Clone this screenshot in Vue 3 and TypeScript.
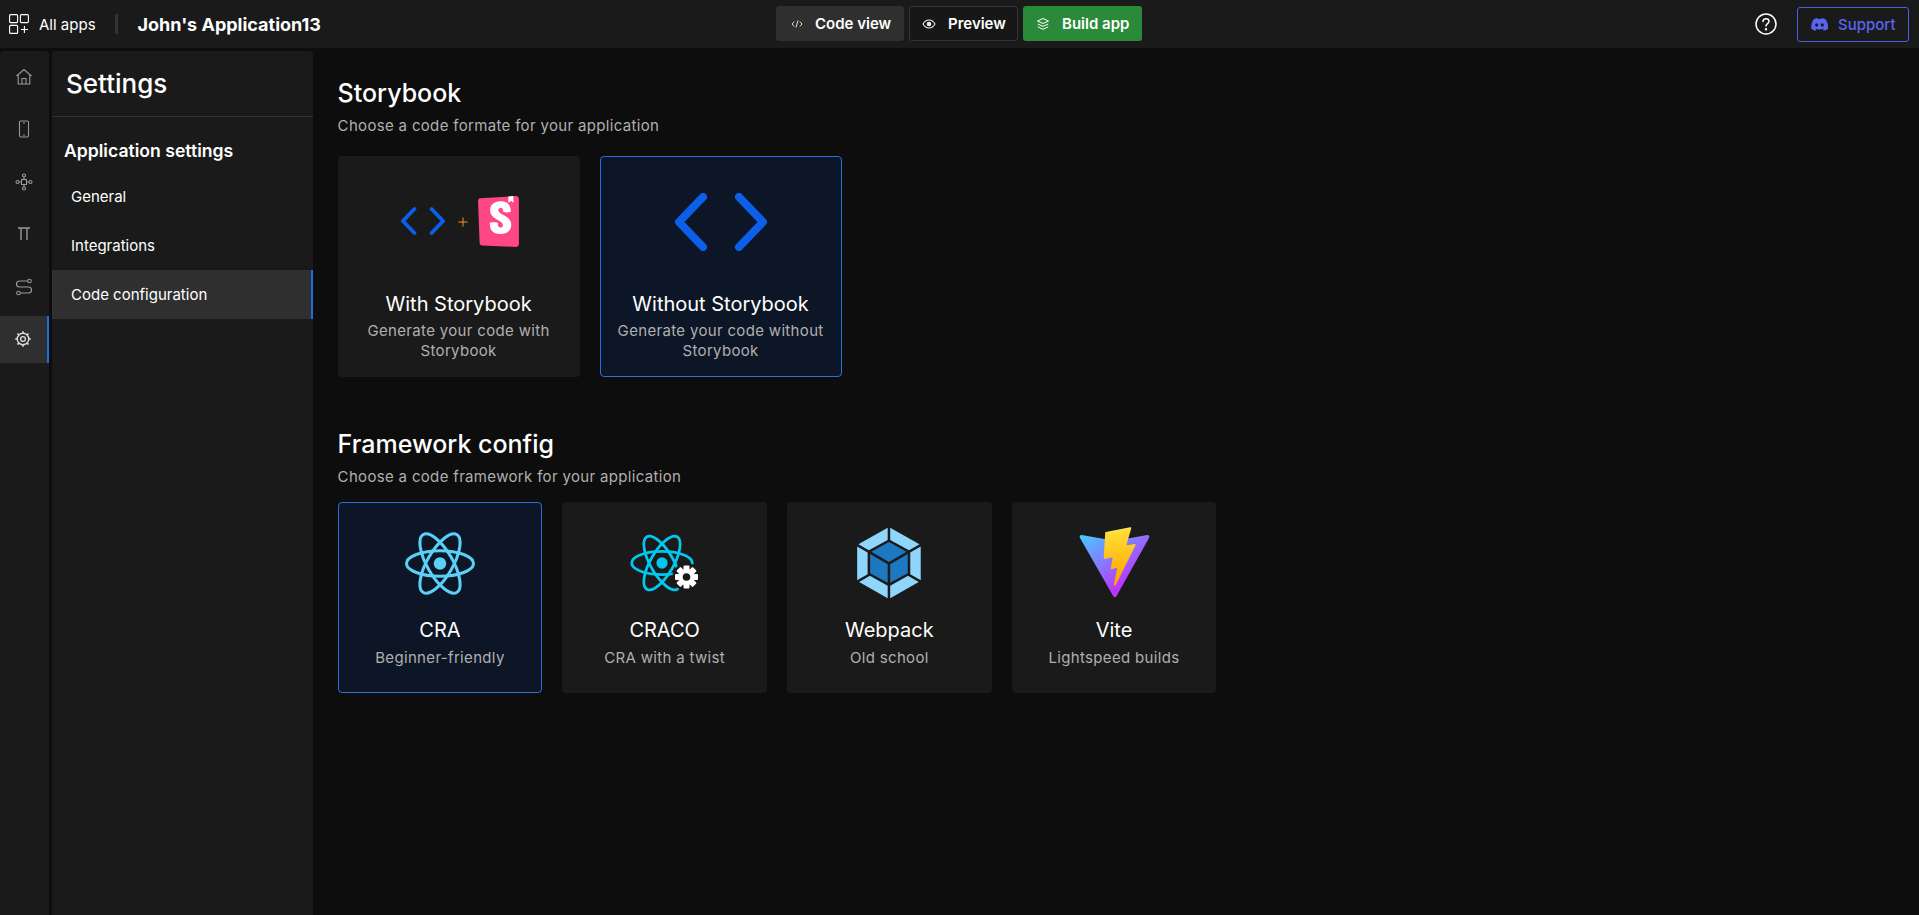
<script setup lang="ts">
const railIcons = ["home", "phone", "flow", "pi", "route", "gear"];
const menu = ["General", "Integrations", "Code configuration"];

const formats = [
  { key: "with", title: "With Storybook", desc: "Generate your code with Storybook" },
  { key: "without", title: "Without Storybook", desc: "Generate your code without Storybook", active: true },
];

const frameworks = [
  { key: "cra", title: "CRA", desc: "Beginner-friendly", active: true },
  { key: "craco", title: "CRACO", desc: "CRA with a twist" },
  { key: "webpack", title: "Webpack", desc: "Old school" },
  { key: "vite", title: "Vite", desc: "Lightspeed builds" },
];
</script>

<template>
  <div class="app">
    <header class="topbar">
      <div class="top-left">
        <svg class="apps-icon" viewBox="0 0 20 20" fill="none" stroke="#fff" stroke-width="1.1">
          <rect x="0.6" y="0.6" width="8" height="8" rx="1" />
          <rect x="11.4" y="0.6" width="8" height="8" rx="1" />
          <rect x="0.6" y="11.4" width="8" height="8" rx="1" />
          <path d="M15.4 12v7M12 15.5h7" />
        </svg>
        <span class="all-apps">All apps</span>
        <span class="divider"></span>
        <span class="app-name">John's Application13</span>
      </div>
      <div class="top-center">
        <button class="btn btn-code">
          <svg width="12" height="12" viewBox="0 0 12 12" fill="none" stroke="#ddd" stroke-width="1">
            <path d="M3.2 3.5 1 6l2.2 2.5M8.8 3.5 11 6 8.8 8.5M7 2.5 5 9.5" />
          </svg>
          Code view
        </button>
        <button class="btn btn-preview">
          <svg width="14" height="14" viewBox="0 0 14 14" fill="none" stroke="#eee" stroke-width="1.1">
            <path d="M1 7c1.5-2.7 3.5-4 6-4s4.500 1.300 6 4c-1.500 2.700-3.500 4-6 4s-4.500-1.300-6-4z" />
            <circle cx="7" cy="7" r="1.8" fill="#eee" />
          </svg>
          Preview
        </button>
        <button class="btn btn-build">
          <svg width="14" height="14" viewBox="0 0 14 14" fill="none" stroke="#fff" stroke-width="1">
            <path d="M7 1.500 12.500 4 7 6.500 1.500 4zM1.800 7 7 9.400 12.200 7M1.800 9.800 7 12.300l5.200-2.500" />
          </svg>
          Build app
        </button>
      </div>
      <div class="top-right">
        <svg class="help" width="22" height="22" viewBox="0 0 22 22" fill="none" stroke="#fff" stroke-width="1.5">
          <circle cx="11" cy="11" r="10" />
          <path d="M8 8.500c0-1.700 1.300-2.800 3-2.800s3 1.100 3 2.600c0 2.400-3 2.400-3 4.700" stroke-linecap="round" />
          <circle cx="11" cy="16.200" r="0.5" fill="#fff" />
        </svg>
        <button class="support">
          <svg width="17" height="13" viewBox="0 0 71 55" fill="#5865f2">
            <path
              d="M60.100 4.900A58.500 58.500 0 0 0 45.700.4a40 40 0 0 0-1.800 3.700 54 54 0 0 0-16.200 0A37 37 0 0 0 25.800.4 58.300 58.300 0 0 0 11.300 4.900C2.200 18.600-.3 31.900.9 45.100a59 59 0 0 0 17.900 9.100c1.500-2 2.700-4.100 3.800-6.300a38 38 0 0 1-5.700-2.700l1.400-1.100a42 42 0 0 0 35.800 0l1.400 1.100a36 36 0 0 1-5.700 2.700c1.100 2.200 2.300 4.300 3.800 6.300a58.800 58.800 0 0 0 17.900-9.100c1.400-15.300-2.500-28.500-10.400-40.200zM23.700 37c-3.500 0-6.400-3.200-6.400-7.200s2.800-7.200 6.400-7.200 6.500 3.300 6.400 7.200c0 4-2.800 7.200-6.400 7.200zm23.600 0c-3.500 0-6.400-3.200-6.400-7.200s2.800-7.200 6.400-7.200 6.500 3.300 6.400 7.200c0 4-2.800 7.200-6.400 7.200z"
            />
          </svg>
          Support
        </button>
      </div>
    </header>

    <div class="body">
      <nav class="rail">
        <div v-for="icon in railIcons" :key="icon" class="rail-item" :class="{ active: icon === 'gear' }">
          <svg width="20" height="20" viewBox="0 0 20 20" fill="none" stroke="currentColor" stroke-width="1.1">
            <template v-if="icon === 'home'">
              <path d="M2.500 9 10 2.500 17.500 9M4.200 8v9h11.600V8" />
              <path d="M8 17v-5.500h4V17" />
            </template>
            <template v-else-if="icon === 'phone'">
              <rect x="5.500" y="2" width="9" height="16" rx="1.200" />
              <path d="M9 4h2M9 16h2" />
            </template>
            <template v-else-if="icon === 'flow'">
              <rect x="7.500" y="7.500" width="5" height="5" />
              <circle cx="10" cy="3.500" r="1.500" />
              <circle cx="10" cy="16.500" r="1.500" />
              <circle cx="3.500" cy="10" r="1.500" />
              <circle cx="16.500" cy="10" r="1.500" />
              <path d="M10 5v2.500M10 12.500V15M5 10h2.500M12.500 10H15" />
            </template>
            <template v-else-if="icon === 'pi'">
              <path d="M4 4h12M7 4v12M13 4v12" stroke-width="1.400" />
            </template>
            <template v-else-if="icon === 'route'">
              <circle cx="15.500" cy="4" r="1.800" />
              <circle cx="4.500" cy="16" r="1.800" />
              <path d="M13.700 4H5.500a2.900 2.900 0 0 0 0 6h9a3 3 0 0 1 0 6H6.300" stroke-width="1.200" />
            </template>
            <template v-else>
              <circle cx="10" cy="10" r="2.400" stroke-width="1.300" />
              <circle cx="10" cy="10" r="5.800" stroke-width="1.400" />
              <path
                d="M10 2.200v2M10 15.800v2M2.200 10h2M15.800 10h2M4.500 4.500 5.900 5.900M14.100 14.100l1.400 1.400M4.500 15.500l1.400-1.400M14.100 5.900l1.400-1.400"
                stroke-width="1.600"
              />
            </template>
          </svg>
        </div>
      </nav>

      <aside class="sidebar">
        <div class="side-head">Settings</div>
        <div class="side-group">Application settings</div>
        <div v-for="m in menu" :key="m" class="side-item" :class="{ active: m === 'Code configuration' }">{{ m }}</div>
      </aside>

      <main class="content">
        <h2 class="title">Storybook</h2>
        <p class="subtitle">Choose a code formate for your application</p>
        <div class="format-row">
          <div v-for="f in formats" :key="f.key" class="card format" :class="{ active: f.active }">
            <div class="logo" :class="{ 'logo-with': f.key === 'with' }">
              <template v-if="f.key === 'with'">
                <svg width="44" height="28" viewBox="0 0 92 58" fill="none" stroke="#0b5fe8" stroke-width="8" stroke-linecap="round" stroke-linejoin="round">
                  <path d="M28 4 4 29l24 25M64 4l24 25-24 25" />
                </svg>
                <svg class="plus" width="10" height="10" viewBox="0 0 10 10" stroke="#f7911c" stroke-width="1">
                  <path d="M5 .5v9M.5 5h9" />
                </svg>
                <svg width="41" height="51" viewBox="0 0 256 319">
                  <path
                    fill="#ff4785"
                    d="M9.870 293.320.01 30.570C-.31 21.900 6.340 14.550 15.010 14L238.490.03C247.310-.52 254.910 6.180 255.470 15c.02.33.03.66.03 1V302.560c0 8.840-7.160 16-16 16-.24 0-.48 0-.72-.02l-213.600-9.600c-8.320-.37-14.970-7.200-15.280-15.620z"
                  />
                  <path
                    fill="#fff"
                    d="M188.660 39.130l1.530-36.750 30.720-2.410 1.320 37.900a2.400 2.400 0 0 1-3.890 1.970l-11.850-9.320-14.020 10.630a2.400 2.400 0 0 1-3.850-2.020zM157.650 98.910c0 6.220 41.960 3.240 47.600-1.100 0-42.420-22.770-64.720-64.460-64.720-41.680 0-65.040 22.640-65.040 56.600 0 59.140 79.820 60.270 79.820 92.530 0 9.060-4.440 14.430-14.200 14.430-12.720 0-17.750-6.500-17.160-28.600 0-4.790-48.500-6.290-49.980 0-3.760 53.610 29.630 69.070 67.730 69.070 36.920 0 65.860-19.680 65.860-55.300 0-63.320-80.990-61.620-80.990-93 0-12.720 9.470-14.420 15.080-14.420 5.910 0 16.550 1.040 15.740 24.510z"
                  />
                </svg>
              </template>
              <svg v-else width="92" height="58" viewBox="0 0 92 58" fill="none" stroke="#0b5fe8" stroke-width="8" stroke-linecap="round" stroke-linejoin="round">
                <path d="M28 4 4 29l24 25M64 4l24 25-24 25" />
              </svg>
            </div>
            <div class="card-title">{{ f.title }}</div>
            <div class="card-desc">{{ f.desc }}</div>
          </div>
        </div>

        <h2 class="title second">Framework config</h2>
        <p class="subtitle">Choose a code framework for your application</p>
        <div class="framework-row">
          <div v-for="f in frameworks" :key="f.key" class="card framework" :class="{ active: f.active }">
            <div class="logo">
              <svg v-if="f.key === 'cra'" width="70" height="63" viewBox="-11.500 -10.230 23 20.460" fill="none" stroke="#5ad0f7">
                <circle r="2.050" fill="#5ad0f7" stroke="none" />
                <ellipse rx="11" ry="4.200" />
                <ellipse rx="11" ry="4.200" transform="rotate(60)" />
                <ellipse rx="11" ry="4.200" transform="rotate(120)" />
              </svg>
              <svg v-else-if="f.key === 'craco'" class="craco" width="66" height="62" viewBox="0 0 66 62" fill="none">
                <g transform="translate(30 31) scale(2.750)" stroke="#00c8f0">
                  <circle r="2.050" fill="#00c8f0" stroke="none" />
                  <ellipse rx="11" ry="4.200" />
                  <ellipse rx="11" ry="4.200" transform="rotate(60)" />
                  <ellipse rx="11" ry="4.200" transform="rotate(120)" />
                </g>
                <circle cx="54.500" cy="45" r="14" fill="#1a1a1a" />
                <g transform="translate(54.500 45)" fill="#fff">
                  <circle r="8" />
                  <rect v-for="a in [0, 45, 90, 135]" :key="a" x="-11.500" y="-3" width="23" height="6" rx="1" :transform="`rotate(${a})`" />
                  <circle r="3.800" fill="#1a1a1a" />
                </g>
              </svg>
              <svg v-else-if="f.key === 'webpack'" width="82" height="82" viewBox="0 0 1200 1200">
                <path
                  fill="#8ed6fb"
                  d="M1035.600 879.300l-418.100 236.500V931.600L878 788.300l157.600 91zm28.600-25.900V358.800l-153 88.300V765l153 88.400zm-901.500 25.900l418.100 236.500V931.600L320.300 788.300l-157.600 91zm-28.600-25.900V358.800l153 88.300V765l-153 88.400zM152 326.800L580.800 84.200v178.100L306.100 413.400l-2.100 1.200-152-87.800zm894.300 0L617.500 84.100v178.100l274.700 151.100 2.100 1.200 152-87.700z"
                />
                <path
                  fill="#1c78c0"
                  d="M580.800 889.700l-257-141.300v-280l257 148.400v272.900zm36.700 0l257-141.200V468.400L617.500 616.800v272.900zm-18.300-283.600zM341.200 436l258-141.900 258 141.900-258 149-258-149z"
                />
              </svg>
              <svg v-else width="73" height="72" viewBox="0 0 410 404" fill="none">
                <defs>
                  <linearGradient id="viteA" x1="6" y1="33" x2="235" y2="344" gradientUnits="userSpaceOnUse">
                    <stop stop-color="#41d1ff" />
                    <stop offset="1" stop-color="#bd34fe" />
                  </linearGradient>
                  <linearGradient id="viteB" x1="194.650" y1="8.820" x2="236.080" y2="292.990" gradientUnits="userSpaceOnUse">
                    <stop stop-color="#ffea83" />
                    <stop offset="0.083" stop-color="#ffdd35" />
                    <stop offset="1" stop-color="#ffa800" />
                  </linearGradient>
                </defs>
                <path
                  fill="url(#viteA)"
                  d="M399.641 59.525 215.643 388.545c-3.799 6.793-13.559 6.833-17.415.073L10.582 59.556C6.381 52.190 12.680 43.267 21.028 44.759l184.195 32.923c1.175.21 2.378.208 3.553-.006l180.343-32.870c8.320-1.517 14.649 7.338 10.522 14.719z"
                />
                <path
                  fill="url(#viteB)"
                  d="M292.965 1.574 156.801 28.255c-2.238.439-3.895 2.335-4.030 4.611l-8.376 141.464c-.197 3.332 2.863 5.918 6.115 5.168l37.910-8.749c3.547-.818 6.752 2.306 6.023 5.873l-11.263 55.153c-.758 3.712 2.727 6.886 6.352 5.785l23.415-7.114c3.630-1.102 7.118 2.081 6.350 5.796l-17.899 86.633c-1.120 5.419 6.088 8.374 9.094 3.728l2.008-3.103 110.954-221.428c1.858-3.708-1.346-7.935-5.418-7.149l-39.022 7.531c-3.667.707-6.787-2.708-5.752-6.296l25.469-88.291c1.036-3.594-2.095-7.012-5.766-6.293z"
                />
              </svg>
            </div>
            <div class="card-title">{{ f.title }}</div>
            <div class="card-desc">{{ f.desc }}</div>
          </div>
        </div>
      </main>
    </div>
  </div>
</template>

<style>
html,
body {
  margin: 0;
  background: #0d0d0d;
}
</style>

<style scoped>
.app {
  display: flex;
  flex-direction: column;
  height: 100vh;
  overflow: hidden;
  font-family: Inter, "Liberation Sans", sans-serif;
  color: #fff;
  background: #0d0d0d;
}

.topbar {
  position: relative;
  display: flex;
  justify-content: space-between;
  align-items: center;
  height: 48px;
  flex: none;
  background: #1a1a1a;
  padding: 0 10px 0 9px;
}

.top-left {
  display: flex;
  align-items: center;
}

.apps-icon {
  width: 20px;
  height: 20px;
}

.all-apps {
  margin-left: 10px;
  font-size: 15px;
}

.divider {
  width: 3px;
  height: 20px;
  margin: 0 20px 0 19px;
  background: #333;
}

.app-name {
  font-size: 18px;
  font-weight: 700;
}

.top-center {
  position: absolute;
  left: 776px;
  top: 6px;
  display: flex;
  gap: 5px;
}

.btn {
  display: flex;
  align-items: center;
  height: 35px;
  box-sizing: border-box;
  gap: 12px;
  border: 1px solid transparent;
  border-radius: 3px;
  color: #fff;
  font: 600 15px Inter, sans-serif;
  white-space: nowrap;
  background: none;
  padding: 0 0 0 12px;
}

.btn-code {
  width: 128px;
  padding-left: 14px;
  background: #2f2f2f;
}

.btn-preview {
  width: 109px;
  border-color: #333;
  background: #171717;
}

.btn-build {
  width: 119px;
  background: #2a8a3a;
}

.top-right {
  display: flex;
  align-items: center;
  gap: 20px;
}

.support {
  display: flex;
  align-items: center;
  width: 112px;
  height: 35px;
  box-sizing: border-box;
  gap: 10px;
  padding: 0 0 0 13px;
  border: 1px solid #4d5fe0;
  border-radius: 3px;
  background: none;
  color: #5865f2;
  font: 500 15px Inter, sans-serif;
}

.body {
  display: flex;
  flex: 1;
  min-height: 0;
  padding-top: 3px;
}

.rail {
  display: flex;
  flex-direction: column;
  gap: 5.6px;
  width: 49px;
  flex: none;
  padding-top: 2px;
  background: #1a1a1a;
  border-radius: 4px 4px 0 0;
  color: #999;
}

.rail-item {
  display: flex;
  justify-content: center;
  align-items: center;
  height: 47px;
  padding-right: 2px;
  box-sizing: border-box;
}

.rail-item.active {
  background: #2f2f2f;
  border-right: 2px solid #1d6ce0;
  padding-right: 1px;
  color: #ddd;
}

.sidebar {
  width: 261px;
  margin-left: 3px;
  flex: none;
  background: #1a1a1a;
  border-radius: 4px 4px 0 0;
}

.side-head {
  height: 66px;
  box-sizing: border-box;
  padding: 18px 0 0 14px;
  border-bottom: 1px solid #333;
  font-size: 26px;
  font-weight: 500;
  line-height: 29px;
}

.side-group {
  height: 55px;
  padding: 23px 0 0 12px;
  box-sizing: border-box;
  font-size: 17.6px;
  font-weight: 600;
  line-height: 21px;
}

.side-item {
  display: flex;
  align-items: center;
  height: 49px;
  box-sizing: border-box;
  padding-left: 19px;
  font-size: 15px;
}

.side-item.active {
  background: #2f2f2f;
  border-right: 2px solid #1d6ce0;
}

.content {
  flex: 1;
  padding: 28px 0 0 24.6px;
  min-width: 0;
}

.title {
  margin: 0;
  font-size: 25px;
  font-weight: 500;
  line-height: 29px;
}

.title.second {
  margin-top: 53px;
}

.subtitle {
  margin: 8px 0 0;
  font-size: 15px;
  line-height: 20px;
  letter-spacing: 0.33px;
  color: #b0b0b0;
}

.format-row,
.framework-row {
  display: flex;
  gap: 20px;
  margin-top: 20px;
}

.framework-row {
  margin-top: 15px;
}

.card {
  display: flex;
  flex-direction: column;
  align-items: center;
  box-sizing: border-box;
  border: 1px solid transparent;
  border-radius: 4px;
  background: #1a1a1a;
  text-align: center;
}

.card.active {
  background: #0d1626;
  border-color: #2a6fdc;
}

.format {
  width: 242px;
  height: 221px;
  padding: 0 10px;
}

.framework {
  width: 204.7px;
  height: 191px;
}

.logo {
  display: flex;
  align-items: center;
  justify-content: center;
}

.format .logo {
  height: 130px;
}

.format .logo-with {
  height: 128px;
  padding: 0 0 2px 2px;
}

.framework .logo {
  height: 110px;
  padding-top: 5px;
}

.plus {
  margin: 2px 10px 0 13px;
}

.card-title {
  font-size: 20px;
  line-height: 24px;
}

.format .card-title {
  margin-top: 5px;
}

.card-desc {
  margin-top: 6px;
  font-size: 15px;
  line-height: 20px;
  letter-spacing: 0.33px;
  color: #b0b0b0;
}

.format .card-desc {
  margin-top: 5px;
}

.craco {
  overflow: visible;
}
</style>
